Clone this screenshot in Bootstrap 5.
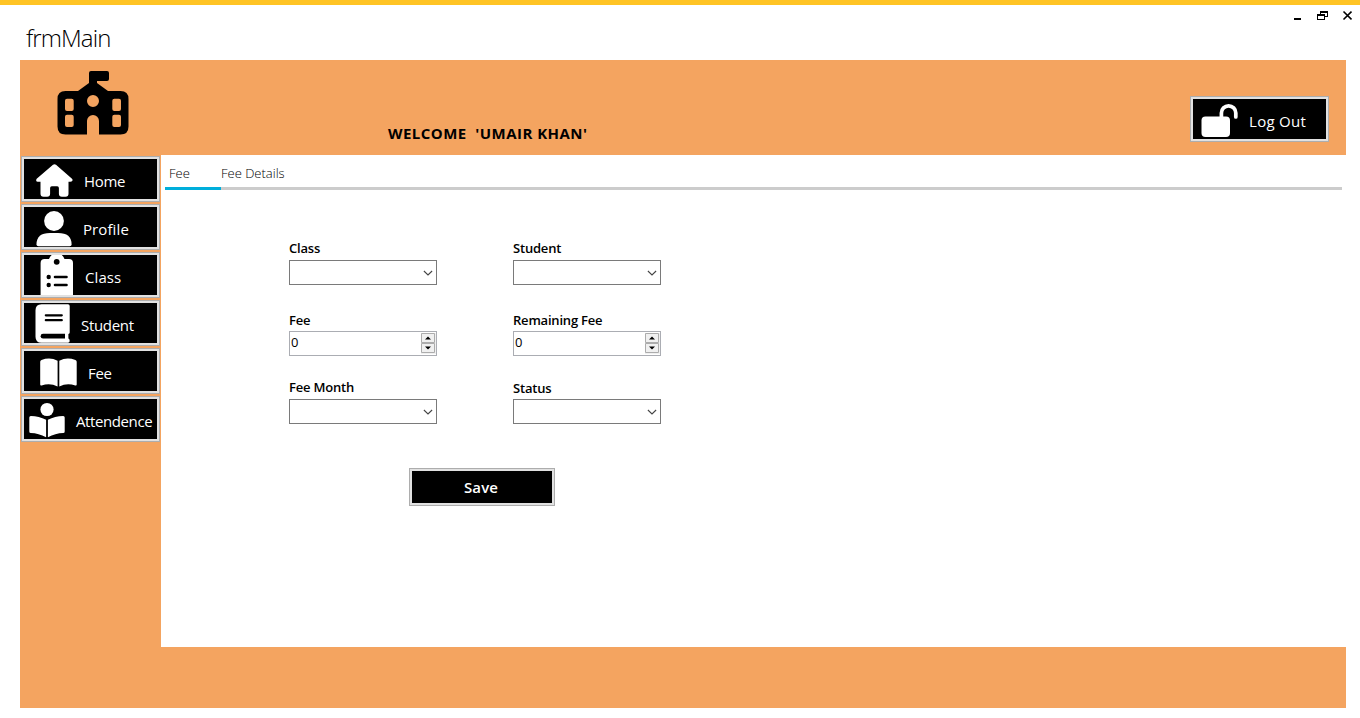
<!DOCTYPE html>
<html lang="en">
<head>
<meta charset="utf-8">
<title>frmMain</title>
<link href="https://cdn.jsdelivr.net/npm/bootstrap@5.3.0/dist/css/bootstrap.min.css" rel="stylesheet">
<style>
body{font-family:"Open Sans","Noto Sans",sans-serif;color:#000;background:#fff;width:1360px;height:718px;overflow:hidden;border-top:5px solid #ffc425}
svg{display:block;flex:none}
.titlebar{height:55px;padding:0 8px 0 26px}
.form-title{font-weight:300;font-size:24px;line-height:32px;margin-top:17px;letter-spacing:-.9px}
.shell{width:1326px;height:648px;margin-left:20px;background:#f4a460}
.banner{height:95px;padding-right:17px}
.welcome{font-weight:700;font-size:15px;line-height:20px;white-space:pre;margin:63px 0 0 259px;letter-spacing:.46px}
.tile{width:139px;height:46px;padding:0;border:1px solid #adadad;border-radius:0;background:#000;box-shadow:inset 0 0 0 2px #e1e1e1;color:#fff;font-size:15px;line-height:20px;letter-spacing:-.3px;overflow:hidden}
.tile svg{margin-left:2px}
.tile:hover{color:#fff;background:#000}
.tile span{margin-top:3px}
.tile .snug{letter-spacing:-.4px}
.tile .loose{letter-spacing:.1px}
.tile .looser{letter-spacing:.3px}
.side{width:141px;padding:1px 1px 0;gap:2px}
.pane{height:492px;background:#fff;padding:0 4px}
.tabs{height:35px;border-bottom:3px solid #ccc}
.tabs .nav-link{height:35px;width:56px;padding:8px 0 0 4px;color:#000;font-size:13px;line-height:20px;font-weight:300;white-space:nowrap;letter-spacing:0}
.tabs .nav-link.active{border-bottom:3px solid #00aedb}
.tabs .nav-link+.nav-link{padding-left:0;width:80px}
.entry{width:372px;margin:48px 0 0 124px;column-gap:76px}
.cell{width:148px}
.cell label{display:block;font-weight:600;font-size:13px;line-height:20px;height:22px;white-space:nowrap;letter-spacing:-.2px}
.cell .near{height:21px}
.combo{height:25px;border:1px solid #7a7a7a;padding-right:3px}
.spin{height:25px;border:1px solid #abadb3;padding:1px 0 1px 1px;font-size:13px;line-height:18px}
.save{width:146px;height:38px;font-weight:600;letter-spacing:.1px;padding-right:2px}
</style>
</head>
<body>
<header class="titlebar d-flex justify-content-between align-items-start">
  <h1 class="form-title mb-0">frmMain</h1>
  <svg width="60" height="14" viewBox="1292 8 60 14" style="margin-top:3px" shape-rendering="crispEdges"><path d="M1294 18h7v2h-7z"/><path fill="none" stroke="#000" d="M1318 14.500h6.500v5h-7v-5zM1320.500 14v-2.500h7v5h-3"/><path d="M1317 14h8v2h-8zM1320 11h8v2h-8z"/><path d="M1343.500 11.500l8 8m0-8l-8 8" stroke="#000" stroke-width="1.600" shape-rendering="auto"/></svg>
</header>
<div class="shell">
  <div class="banner d-flex align-items-start">
    <svg width="73" height="66" viewBox="56 70 73 66" style="margin:10px 0 0 36px"><path fill-rule="evenodd" d="M91 71h16q2 0 2 2v6q0 2-2 2H97v2l11 8h12.500q8 0 8 8v27.500q0 8-8 8H99V121a6 6 0 0 0-12 0v13.500H65.500q-8 0-8-8V99q0-8 8-8H78l11-8V73q0-2 2-2zM93 95a6 6 0 1 0 0 12 6 6 0 0 0 0-12zM67 98.700q-2 0-2 2V109q0 2 2 2h4.700q2 0 2-2v-8.300q0-2-2-2zM67 114.700q-2 0-2 2v8.300q0 2 2 2h4.700q2 0 2-2v-8.300q0-2-2-2zM114.300 98.700q-2 0-2 2V109q0 2 2 2h4.700q2 0 2-2v-8.300q0-2-2-2zM114.300 114.700q-2 0-2 2v8.300q0 2 2 2h4.700q2 0 2-2v-8.300q0-2-2-2z"/></svg>
    <div class="welcome">WELCOME  'UMAIR KHAN'</div>
    <button class="tile btn d-flex align-items-center ms-auto" style="margin-top:36px"><svg width="56" height="40" viewBox="1193 98.500 56 40"><rect x="1201.500" y="116" width="28.500" height="20.400" rx="4" fill="#fff"/><path d="M1221.400 118v-5.500a7.200 7.200 0 0 1 14.400 0v4" fill="none" stroke="#fff" stroke-width="3.700" stroke-linecap="round"/></svg><span class="looser">Log Out</span></button>
  </div>
  <div class="d-flex">
    <nav class="side d-flex flex-column">
      <button class="tile btn d-flex align-items-center"><svg width="60" height="40" viewBox="24 159 60 40"><path fill="#fff" d="M53 164.800q1.500-1.200 3 0l16 14q1 1.100.4 2-.7.900-2.200.900H68.500v12q0 3-3 3h-3.600q-3 0-3-3v-5.700q0-1.700-1.700-1.700h-5.400q-1.700 0-1.700 1.700v5.700q0 3-3 3h-3.600q-3 0-3-3v-12h-2.800q-1.300 0-1.500-.9t.5-2z"/></svg><span>Home</span></button>
      <button class="tile btn d-flex align-items-center"><svg width="59" height="40" viewBox="24 206.500 59 40"><g fill="#fff"><circle cx="54" cy="220.500" r="9.900"/><path d="M50 232.500h8q13.600 0 13.600 11.400 0 1.800-2 1.800H38.500q-2 0-2-1.800 0-11.400 13.500-11.400z"/></g></svg><span class="loose">Profile</span></button>
      <button class="tile btn d-flex align-items-center"><svg width="61" height="40" viewBox="24 255 61 40"><path fill="#fff" d="M49 259a8.200 8.200 0 0 1 15.500 0H69q4 0 4 4v36H40.600v-36q0-4 4-4z"/><circle cx="56.700" cy="261.800" r="2.900"/><circle cx="48.700" cy="277" r="2.200"/><circle cx="48.700" cy="285" r="2.200"/><path d="M55 277h11.500m-11.500 8h11.500" stroke="#000" stroke-width="2.600" stroke-linecap="round"/></svg><span class="loose">Class</span></button>
      <button class="tile btn d-flex align-items-center"><svg width="57" height="40" viewBox="24 303 57 40"><path fill="#fff" d="M41.500 304.300H68q1.700 0 1.700 1.700v26.500q0 1.300-1.300 1.500v4.500q1.300.3 1.300 2.500 0 1.700-1.700 1.700H41.500q-6 0-6-6v-26.500q0-6 6-6z"/><path d="M45.800 315.300h16m-16 4.900h16" stroke="#000" stroke-width="2.200" stroke-linecap="round"/><path d="M43 333.800h22v4.700H43a2.300 2.300 0 0 1 0-4.700z"/></svg><span>Student</span></button>
      <button class="tile btn d-flex align-items-center"><svg width="64" height="40" viewBox="24 351 64 40"><path fill="#fff" d="M57.600 360.700v25.800q-7.600-3.900-16-1-1.400.4-1.400-1v-22.800q0-1.200 1.300-1.700 8.500-3.300 16.100.7zM59.300 360.700v25.800q7.600-3.900 16-1 1.400.4 1.400-1v-22.800q0-1.200-1.300-1.700-8.500-3.300-16.100.7z"/></svg><span>Fee</span></button>
      <button class="tile btn d-flex align-items-center"><svg width="52" height="40" viewBox="24 399 52 40"><g fill="#fff"><circle cx="47" cy="409.500" r="6.600"/><path d="M46.100 419.700v17.500q-7.500-4-15.300-4.200-1.500 0-1.500-1.600v-13.900q0-1.500 1.500-1.500 8.200.2 15.300 3.700zM47.900 419.700v17.500q7.500-4 15.300-4.200 1.500 0 1.500-1.600v-13.900q0-1.500-1.500-1.500-8.200.2-15.300 3.700z"/></g></svg><span class="snug">Attendence</span></button>
    </nav>
    <main class="pane flex-grow-1">
      <div class="tabs nav flex-nowrap"><a class="nav-link active">Fee</a><a class="nav-link">Fee Details</a></div>
      <form>
      <div class="entry d-flex flex-wrap">
        <div class="cell"><label>Class</label><div class="combo d-flex align-items-center justify-content-end"><svg width="10" height="6"><path d="M.9 1l4.100 4 4.100-4" fill="none" stroke="#444" stroke-width="1.100"/></svg></div></div>
        <div class="cell"><label>Student</label><div class="combo d-flex align-items-center justify-content-end"><svg width="10" height="6"><path d="M.9 1l4.100 4 4.100-4" fill="none" stroke="#444" stroke-width="1.100"/></svg></div></div>
        <div class="cell" style="margin-top:25px"><label class="near">Fee</label><div class="spin d-flex justify-content-between"><span>0</span><svg width="15" height="21"><path d="M0 0h15v21H0z" fill="#f0f0f0"/><path d="M.5.500h13v9H.5zM.5 10.500h13v9H.5z" fill="#f0f0f0" stroke="#acacac"/><path d="M4 6.500l3-3 3 3zM4 13.500l3 3 3-3z"/></svg></div></div>
        <div class="cell" style="margin-top:25px"><label class="near">Remaining Fee</label><div class="spin d-flex justify-content-between"><span>0</span><svg width="15" height="21"><path d="M0 0h15v21H0z" fill="#f0f0f0"/><path d="M.5.500h13v9H.5zM.5 10.500h13v9H.5z" fill="#f0f0f0" stroke="#acacac"/><path d="M4 6.500l3-3 3 3zM4 13.500l3 3 3-3z"/></svg></div></div>
        <div class="cell" style="margin-top:21px"><label>Fee Month</label><div class="combo d-flex align-items-center justify-content-end"><svg width="10" height="6"><path d="M.9 1l4.100 4 4.100-4" fill="none" stroke="#444" stroke-width="1.100"/></svg></div></div>
        <div class="cell" style="margin-top:22px"><label class="near">Status</label><div class="combo d-flex align-items-center justify-content-end"><svg width="10" height="6"><path d="M.9 1l4.100 4 4.100-4" fill="none" stroke="#444" stroke-width="1.100"/></svg></div></div>
      </div>
      <button type="button" class="tile save btn" style="margin:44px 0 0 244px">Save</button>
      </form>
    </main>
  </div>
</div>
<script src="https://cdn.jsdelivr.net/npm/bootstrap@5.3.0/dist/js/bootstrap.bundle.min.js"></script>
</body>
</html>
